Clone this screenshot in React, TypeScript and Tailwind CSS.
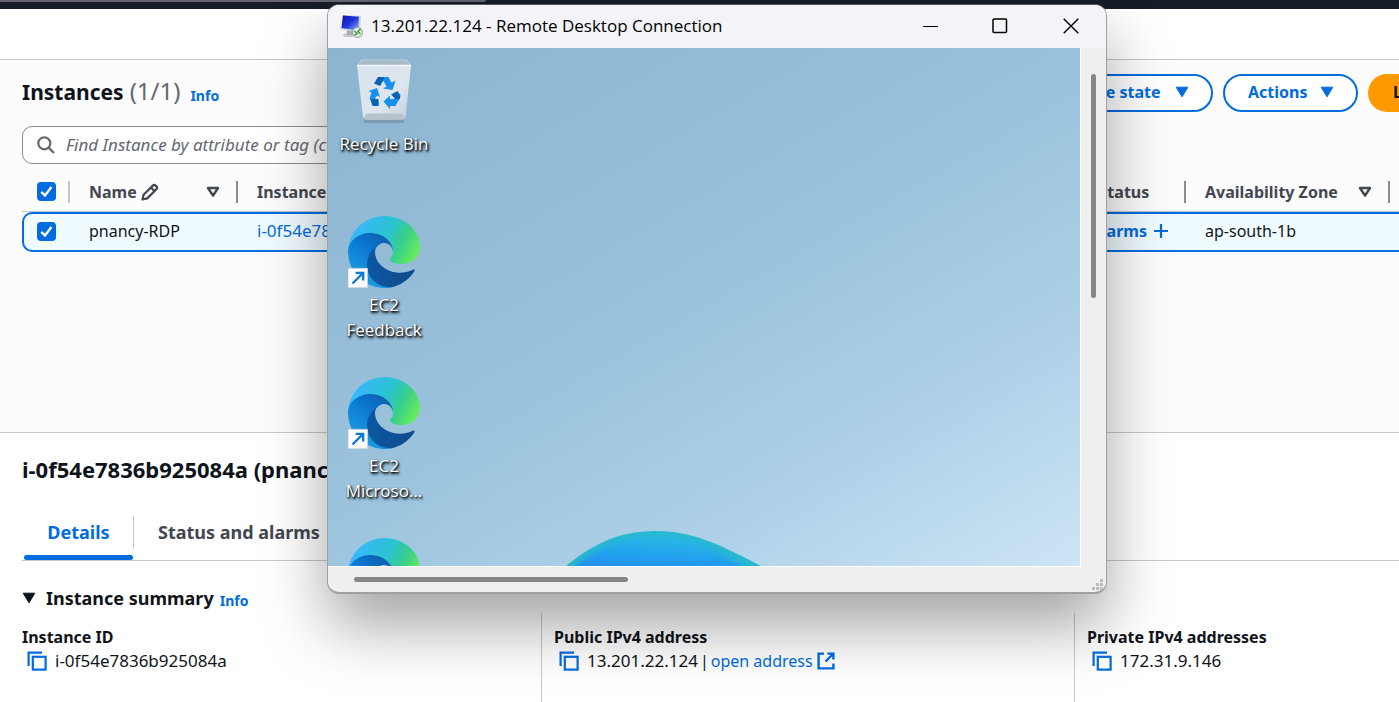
import { useId, type ReactNode } from "react";

const FONT = "font-['Noto_Sans',sans-serif]";
const SEGOE = "font-['Open_Sans',sans-serif]";

function CopyIcon() {
  return (
    <svg viewBox="0 0 20 20" className="h-5 w-5 shrink-0" fill="none" stroke="#006ce0" strokeWidth="2.2">
      <path d="M1.6 15V1.6H15" />
      <rect x="5.8" y="5.8" width="12.8" height="12.8" />
    </svg>
  );
}

function ExternalIcon() {
  return (
    <svg viewBox="0 0 18 18" className="h-[18px] w-[18px]" fill="none" stroke="#006ce0" strokeWidth="2.4">
      <path d="M7 1.6H1.6V16.4H16.4V11.5" />
      <path d="M10.5 1.6H16.4V7.5M16 2L8.5 9.5" />
    </svg>
  );
}

function PencilIcon() {
  return (
    <svg viewBox="0 0 18 18" className="h-[18px] w-[18px]" fill="none" stroke="#424650" strokeWidth="2.2" strokeLinejoin="round">
      <path d="M1.5 16.5L2.6 11.8L11.8 2.6a2 2 0 0 1 2.8 0l.8.8a2 2 0 0 1 0 2.8L6.2 15.4Z" />
      <path d="M10 4.5L13.5 8" />
    </svg>
  );
}

function SortIcon() {
  return (
    <svg viewBox="0 0 14 12" className="h-3 w-3.5" fill="none" stroke="#424650" strokeWidth="2.4" strokeLinejoin="round">
      <path d="M2 2h10L7 9.6Z" />
    </svg>
  );
}

function CaretIcon({ color }: { color: string }) {
  return (
    <svg viewBox="0 0 14 12" className="h-3 w-3.5 shrink-0" fill={color} stroke={color} strokeWidth="1" strokeLinejoin="round">
      <path d="M1.2 1.2h11.6L7 10.8Z" />
    </svg>
  );
}

function SearchIcon() {
  return (
    <svg viewBox="0 0 18 18" className="h-[18px] w-[18px] shrink-0" fill="none" stroke="#656871" strokeWidth="2.2">
      <circle cx="7.3" cy="7.3" r="6" />
      <path d="M11.6 11.6L17 17" />
    </svg>
  );
}

function CheckBox({ label }: { label: string }) {
  return (
    <label className="relative block h-[19px] w-[19px]">
      <input
        type="checkbox"
        defaultChecked
        aria-label={label}
        className="block h-[19px] w-[19px] appearance-none rounded bg-[#b4b8c0] checked:bg-[#006ce0]"
      />
      <svg viewBox="0 0 19 19" className="pointer-events-none absolute inset-0" fill="none" stroke="#fff" strokeWidth="2.4">
        <path d="M4.2 9.8L8 13.4L14.4 5" />
      </svg>
    </label>
  );
}

function EdgeIcon() {
  const id = useId();
  return (
    <svg viewBox="0 0 256 256" className="h-full w-full">
      <defs>
        <linearGradient id={`${id}a`} x1="63" y1="178" x2="242" y2="178" gradientUnits="userSpaceOnUse">
          <stop offset="0" stopColor="#0c59a4" />
          <stop offset="1" stopColor="#114a8b" />
        </linearGradient>
        <linearGradient id={`${id}b`} x1="157" y1="95" x2="50" y2="235" gradientUnits="userSpaceOnUse">
          <stop offset="0" stopColor="#0f5fae" />
          <stop offset=".35" stopColor="#0a75cf" />
          <stop offset="1" stopColor="#1b9de2" />
        </linearGradient>
        <linearGradient id={`${id}c`} x1="40" y1="60" x2="235" y2="160" gradientUnits="userSpaceOnUse">
          <stop offset="0" stopColor="#36b9f6" />
          <stop offset=".45" stopColor="#2bc3d0" />
          <stop offset=".72" stopColor="#38cf8a" />
          <stop offset="1" stopColor="#66eb5e" />
        </linearGradient>
      </defs>
      <g transform="translate(-4.63 -4.92)">
        <path fill={`url(#${id}a)`} d="M235.68 195.46a93.73 93.73 0 0 1-10.54 4.71 101.87 101.87 0 0 1-35.9 6.46c-47.32 0-88.54-32.55-88.54-74.32A31.48 31.48 0 0 1 117.13 105c-42.8 1.8-53.8 46.4-53.8 72.53 0 73.88 68.09 81.37 82.76 81.37 7.91 0 19.84-2.3 27-4.56l1.31-.44a128.34 128.34 0 0 0 66.6-52.8 4 4 0 0 0-5.32-5.64Z" />
        <path fill={`url(#${id}b)`} d="M110.34 246.34A79.2 79.2 0 0 1 87.6 225a80.72 80.72 0 0 1 29.53-120c3.12-1.47 8.45-4.13 15.54-4a32.35 32.35 0 0 1 25.69 13 31.88 31.88 0 0 1 6.36 18.66c0-.21 24.46-79.6-80-79.6-43.9 0-80 41.66-80 78.21a130.15 130.15 0 0 0 12.11 56 128 128 0 0 0 156.38 67.11 75.55 75.55 0 0 1-62.78-8Z" />
        <path fill={`url(#${id}c)`} d="M156.94 153.78c-.81 1.05-3.3 2.5-3.3 5.66 0 2.61 1.7 5.12 4.72 7.23 14.38 10 41.49 8.68 41.56 8.68a59.56 59.56 0 0 0 30.27-8.35 61.38 61.38 0 0 0 30.43-52.88c.26-22.41-8-37.31-11.34-43.91-21.19-41.45-66.93-65.29-116.67-65.29a128 128 0 0 0-128 126.2c.48-36.54 36.8-66.05 80-66.05 3.5 0 23.46.34 42 10.07 16.34 8.58 24.9 18.94 30.85 29.21 6.18 10.67 7.28 24.15 7.28 29.52s-2.74 13.33-7.8 19.91Z" />
      </g>
      <rect x="0" y="186" width="69" height="69" fill="#fdfdfd" stroke="#c9d3da" strokeWidth="3" />
      <path d="M16 240L52 204M27 202H54V229" fill="none" stroke="#0a78d4" strokeWidth="8" />
    </svg>
  );
}

function RecycleBinIcon() {
  return (
    <svg viewBox="0 0 72 72" className="h-full w-full">
      <defs>
        <linearGradient id="bin-body" x1="0" y1="0" x2="1" y2="1">
          <stop offset="0" stopColor="#d9e3ec" />
          <stop offset=".6" stopColor="#dde6ee" />
          <stop offset="1" stopColor="#c3cfda" />
        </linearGradient>
      </defs>
      <path d="M15 62h42l-1 6H16Z" fill="#6f8596" opacity=".55" />
      <path d="M13 5h45l5 5-2 3H10L9 10Z" fill="#a9bac7" />
      <path d="M9.5 10.5L14 5h44l5 5.5" fill="none" stroke="#bccbd6" strokeWidth="1.2" />
      <path d="M9 10.5H63L57.5 62q-.3 2.5-3 2.5H18q-2.7 0-3-2.5Z" fill="url(#bin-body)" />
      <path d="M9 10.5H63" stroke="#f3f7fa" strokeWidth="1.5" />
      <path d="M15.5 62.5L19 58.5H53.5L57 62q-.5 2.5-3 2.5H18q-2 0-2.5-2Z" fill="#b9c2ca" />
      <g fill="#1690ec">
        <path d="M32 22h8.5l3 5.5 4-2-3 9.5-9.5-1.5 3.5-2-3-5.5Z" />
        <path d="M20.5 36l8.5-3 3 9-3-1.5-2.500 4.500 4 .5v5.500h-4.500l-4.500-7.500 2-6Z" />
        <path d="M35.5 46.5l6.500-6v3.500h4l2-4 4.500-1-1.500 5.500-3.500 6.500H42v3Z" />
      </g>
      <g fill="#0763b3">
        <path d="M30 22h6.5l-1.5 4-3 5-6-2.5Z" />
        <path d="M22.5 44h8V51h-4.5q-1.5 0-2-1Z" />
        <path d="M43 39.5l6.5-3.5 3 5-1 3.5-4-.5Z" />
      </g>
    </svg>
  );
}

function RdpIcon() {
  return (
    <svg viewBox="0 0 24 24" className="h-6 w-6 shrink-0">
      <defs>
        <linearGradient id="rdp-screen" x1="0" y1="0" x2="1" y2="1">
          <stop offset="0" stopColor="#0a10a8" />
          <stop offset=".5" stopColor="#1c35dd" />
          <stop offset="1" stopColor="#8db8ff" />
        </linearGradient>
      </defs>
      <ellipse cx="9" cy="21" rx="6" ry="2" fill="#c3c6cc" />
      <path d="M7 16h6v5H7Z" fill="#a9adb5" />
      <path d="M2.5 1L21 2 20 18 .5 15.5Z" fill="#cfd2d8" />
      <path d="M3 1.5L19 2.8 18 16.5 1.5 14Z" fill="url(#rdp-screen)" />
      <circle cx="17.5" cy="18.5" r="5" fill="#e4e8e4" stroke="#94a096" strokeWidth="1" />
      <path d="M14.5 17l2.5 2.5-2.5 2M20.5 15L18 17.5l2.5 2.5" fill="none" stroke="#2e9a3e" strokeWidth="1.4" />
    </svg>
  );
}

function DesktopShortcut({ icon, children }: { icon: ReactNode; children?: ReactNode }) {
  return (
    <div className="flex h-[161px] shrink-0 flex-col items-center gap-1">
      <div className="h-[72px] w-[72px] shrink-0">{icon}</div>
      <div className="text-center text-[17px] leading-[25px] text-white [text-shadow:1px_1px_2px_#000,1px_2px_3px_#000]">
        {children}
      </div>
    </div>
  );
}

function RemoteDesktopWindow() {
  return (
    <section
      aria-label="Remote Desktop Connection"
      className={`${SEGOE} absolute left-[327px] top-1 flex h-[590px] w-[780px] flex-col overflow-hidden rounded-[12px] border border-b-2 border-[#a0a0a2] border-t-[#55585e] bg-[#efefef] shadow-[0_32px_64px_rgba(0,0,0,0.36)]`}
    >
      <header className="flex h-[43px] shrink-0 items-center bg-[#f3f3f8] pb-0.5 pl-3">
        <RdpIcon />
        <h2 className="pl-[7px] text-[17px] text-black">13.201.22.124 - Remote Desktop Connection</h2>
        <div className="ml-auto flex h-full">
          <button type="button" aria-label="Minimize" className="flex w-[66px] items-center justify-center">
            <svg viewBox="0 0 16 16" className="h-4 w-4" stroke="#000" strokeWidth="1"><path d="M0 8.5H15" /></svg>
          </button>
          <button type="button" aria-label="Maximize" className="flex w-[72px] items-center justify-center">
            <svg viewBox="0 0 16 16" className="h-4 w-4" fill="none" stroke="#000" strokeWidth="1.5"><rect x="1" y="1" width="13.5" height="13.5" rx="1" /></svg>
          </button>
          <button type="button" aria-label="Close" className="flex w-[70px] items-center justify-center">
            <svg viewBox="0 0 16 16" className="h-4 w-4" fill="none" stroke="#000" strokeWidth="1.4"><path d="M.7 .7L15.3 15.3M15.3 .7L.7 15.3" /></svg>
          </button>
        </div>
      </header>
      <div className="flex min-h-0 flex-1">
        <div className="relative flex-1 overflow-hidden border-b border-r border-white bg-[linear-gradient(150deg,#8bb4d1_0%,#95bdd8_30%,#9dc4de_52%,#aed1e8_75%,#cde5f5_100%)]">
          <svg viewBox="0 0 200 36" className="absolute bottom-0 left-[238px] h-9 w-[200px]">
            <defs>
              <linearGradient id="bloom" x1=".2" y1="1" x2=".5" y2="0">
                <stop offset="0" stopColor="#1f8cf0" />
                <stop offset=".5" stopColor="#23a3ee" />
                <stop offset="1" stopColor="#2bb9e4" />
              </linearGradient>
              <filter id="bloom-soft" x="-10%" y="-10%" width="120%" height="140%">
                <feGaussianBlur stdDeviation="2" />
              </filter>
              <clipPath id="bloom-clip">
                <path d="M0 36C25 16 50 1 90 1C130 1 160 18 195 36Z" />
              </clipPath>
            </defs>
            <g clipPath="url(#bloom-clip)">
              <path d="M0 0H200V36H0Z" fill="#28b8d0" />
              <path d="M5 40C30 17 58 6 92 6C125 6 155 22 182 40Z" fill="url(#bloom)" filter="url(#bloom-soft)" />
            </g>
          </svg>
          <div className="flex w-28 flex-col pt-[7px]">
            <DesktopShortcut icon={<RecycleBinIcon />}>Recycle Bin</DesktopShortcut>
            <DesktopShortcut icon={<EdgeIcon />}>EC2<br />Feedback</DesktopShortcut>
            <DesktopShortcut icon={<EdgeIcon />}>EC2<br />Microso...</DesktopShortcut>
            <DesktopShortcut icon={<EdgeIcon />} />
          </div>
        </div>
        <div className="flex w-[25px] shrink-0 justify-center pt-[26px]">
          <div className="h-[224px] w-[5px] rounded-full bg-[#868686]" />
        </div>
      </div>
      <footer className="flex h-[25px] shrink-0 items-center justify-between pl-[26px]">
        <div className="h-[5px] w-[274px] rounded-full bg-[#868686]" />
        <svg viewBox="0 0 12 12" className="mr-0.5 mt-2.5 h-3 w-3" fill="#bdbdbd">
          <path d="M8 0h3v3H8ZM4 4h3v3H4ZM8 4h3v3H8ZM0 8h3v3H0ZM4 8h3v3H4ZM8 8h3v3H8Z" />
        </svg>
      </footer>
    </section>
  );
}

function HeaderCell({ children, sortable = false }: { children: ReactNode; sortable?: boolean }) {
  return (
    <th className="border-b border-[#c6c6cd] p-0 text-left font-bold">
      <div className="flex h-[38px] items-center pl-[19px]">
        <span className="flex items-center gap-1">{children}</span>
        {sortable && <span className="ml-auto pr-4"><SortIcon /></span>}
        <span className={sortable ? "h-[22px] w-0.5 bg-[#8c8c94]" : "ml-auto h-[22px] w-0.5 bg-[#8c8c94]"} />
      </div>
    </th>
  );
}

const ROW_CELL = "h-10 border-y-2 border-[#006ce0] bg-[#f0fbff] p-0 pb-0.5 pl-[19px]";
const PILL = "flex h-[38px] items-center justify-between whitespace-nowrap rounded-full border-2 border-[#006ce0] bg-white pb-0.5 pl-[23px] pr-[22px] font-bold text-[#006ce0]";

function SummaryField({ label, className, children }: { label: string; className: string; children: ReactNode }) {
  return (
    <div className={`h-[90px] pt-3 ${className}`}>
      <dt className="font-bold leading-6">{label}</dt>
      <dd className="flex items-center gap-2 whitespace-nowrap pl-[5px] text-[17px] leading-6">{children}</dd>
    </div>
  );
}

export default function App() {
  return (
    <div className={`${FONT} relative h-screen overflow-hidden bg-white text-[16px] text-[#0f141a]`}>
      <div className="h-[9px] bg-[#161d26]">
        <div className="h-0.5 w-[486px] rounded-br bg-[#656571]" />
      </div>
      <div className="h-[51px] border-b border-[#c6c6cd]" />

      <main className="h-[373px] overflow-hidden border-b border-[#c6c6cd] bg-[#fcfcfc] pl-[22px] pt-[14px]">
        <div className="flex h-[38px] items-center gap-[10px]">
          <h1 className="flex items-baseline gap-1.5 pb-0.5 text-[21px] font-bold">
            Instances <span className="text-[24px] font-normal leading-8 text-[#656871]">(1/1)</span>
          </h1>
          <a href="#info" className="pt-1 text-[14px] font-bold text-[#006ce0]">Info</a>
          <button type="button" className={`${PILL} ml-auto w-[192px]`}>
            Instance state <CaretIcon color="#006ce0" />
          </button>
          <button type="button" className={`${PILL} w-[135px]`}>
            Actions <CaretIcon color="#006ce0" />
          </button>
          <div className="w-[31px] shrink-0">
            <button type="button" className="h-[38px] w-[180px] rounded-full bg-[#ff9900] pb-0.5 pl-[25px] text-left font-bold">
              Launch instances
            </button>
          </div>
        </div>

        <label className="mt-[14px] flex h-[38px] w-2/3 items-center gap-[11px] rounded-[10px] border border-[#8c8c94] bg-white pl-[14px]">
          <SearchIcon />
          <input
            type="search"
            aria-label="Find Instance"
            placeholder="Find Instance by attribute or tag (case-sensitive)"
            className="w-full bg-transparent text-[17px] italic outline-none placeholder:text-[#656871]"
          />
        </label>

        <table className="mt-2 w-full table-fixed border-separate border-spacing-0 whitespace-nowrap text-[#0f141a]">
          <colgroup>
            <col className="w-12" />
            <col className="w-[168px]" />
            <col className="w-[240px]" />
            <col />
            <col className="w-[158px]" />
            <col className="w-[204px]" />
            <col className="w-[9px]" />
          </colgroup>
          <thead className="text-[#424650]">
            <tr>
              <th className="border-b border-[#c6c6cd] p-0">
                <div className="flex h-[39px] items-center justify-between pl-[15px]">
                  <CheckBox label="Select all instances" />
                  <span className="h-[22px] w-0.5 bg-[#c6c6cd]" />
                </div>
              </th>
              <HeaderCell sortable>Name <PencilIcon /></HeaderCell>
              <HeaderCell>Instance ID</HeaderCell>
              <th className="border-b border-[#c6c6cd] p-0" />
              <HeaderCell>Alarm status</HeaderCell>
              <HeaderCell sortable>Availability Zone</HeaderCell>
              <th className="border-b border-[#c6c6cd] p-0" />
            </tr>
          </thead>
          <tbody>
            <tr>
              <td className="h-10 rounded-l-[10px] border-y-2 border-l-2 border-[#006ce0] bg-[#f0fbff] p-0 pb-0.5 pl-[13px]">
                <CheckBox label="Select pnancy-RDP" />
              </td>
              <td className={ROW_CELL}>pnancy-RDP</td>
              <td className={ROW_CELL}><a href="#instance" className="text-[17px] leading-6 text-[#006ce0]">i-0f54e7836b925084a</a></td>
              <td className={ROW_CELL} />
              <td className={ROW_CELL}>
                <a href="#alarms" className="flex items-center justify-end gap-1.5 pr-[17px] font-bold text-[#006ce0]">
                  View alarms
                  <svg viewBox="0 0 16 16" className="h-4 w-4 shrink-0" stroke="currentColor" strokeWidth="2.2"><path d="M8 1v14M1 8h14" /></svg>
                </a>
              </td>
              <td className={ROW_CELL}>ap-south-1b</td>
              <td className={ROW_CELL} />
            </tr>
          </tbody>
        </table>
      </main>

      <section className="pl-[22px]">
        <h2 className="pt-[21px] text-[22px] font-bold leading-[30px]">i-0f54e7836b925084a (pnancy-RDP)</h2>
        <nav className="mt-8 flex h-[45px] border-b border-[#c6c6cd] pl-0.5 text-[18px] font-bold leading-[33px]">
          <button type="button" className="relative w-[109px] pb-3 text-[#006ce0] after:absolute after:inset-x-0 after:bottom-0 after:h-[5px] after:rounded-sm after:bg-[#006ce0]">
            Details
          </button>
          <button type="button" className="h-[33px] border-l border-[#c6c6cd] px-6 text-[#424650]">Status and alarms</button>
        </nav>
        <h3 className="mt-6 flex h-[26px] items-center text-[18px] font-bold">
          <CaretIcon color="#0f141a" />
          <span className="pl-[10px]">Instance summary</span>
          <a href="#summary-info" className="pl-1.5 pt-1 text-[14px] text-[#006ce0]">Info</a>
        </h3>
        <dl className="mt-0.5 grid grid-cols-[519fr_533fr_325fr]">
          <SummaryField label="Instance ID" className="">
            <CopyIcon />i-0f54e7836b925084a
          </SummaryField>
          <SummaryField label="Public IPv4 address" className="border-l border-[#c6c6cd] pl-3">
            <CopyIcon />
            <span className="flex items-center gap-0.5">
              13.201.22.124
              <span className="text-[16px]">|</span>
              <a href="#open" className="flex items-center gap-1 text-[16px] text-[#006ce0]">open address <ExternalIcon /></a>
            </span>
          </SummaryField>
          <SummaryField label="Private IPv4 addresses" className="border-l border-[#c6c6cd] pl-3">
            <CopyIcon />172.31.9.146
          </SummaryField>
        </dl>
      </section>

      <RemoteDesktopWindow />
    </div>
  );
}
